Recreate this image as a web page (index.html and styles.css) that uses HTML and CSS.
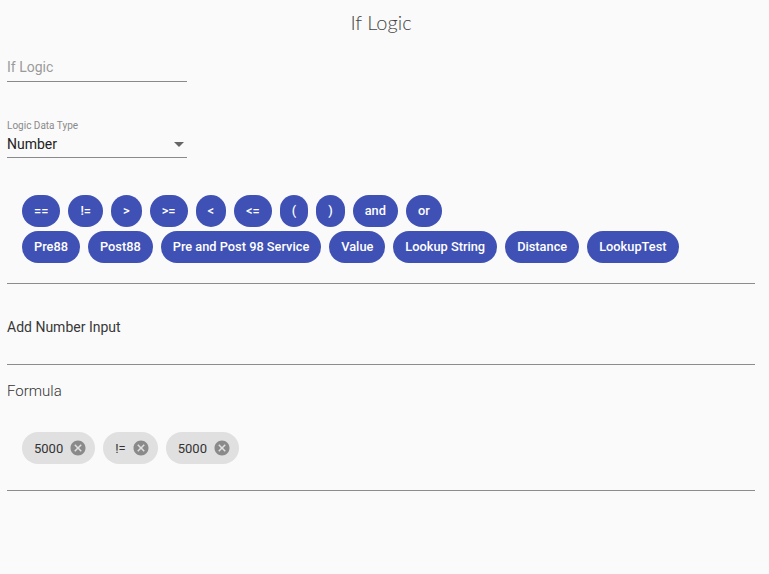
FILE: index.html
```html
<!DOCTYPE html>
<html>
<head>
<meta charset="utf-8">
<link rel="stylesheet" href="styles.css">
</head>
<body>
<div class="page">
  <h1 class="title">If Logic</h1>

  <div class="field field-name">
    <div class="field-input placeholder">If Logic</div>
  </div>

  <div class="field field-type">
    <div class="field-label">Logic Data Type</div>
    <div class="field-input select">
      <span>Number</span>
      <span class="arrow"></span>
    </div>
  </div>

  <div class="btn-rows">
    <div class="btn-row">
      <span class="btn">==</span>
      <span class="btn">!=</span>
      <span class="btn">&gt;</span>
      <span class="btn">&gt;=</span>
      <span class="btn">&lt;</span>
      <span class="btn">&lt;=</span>
      <span class="btn">(</span>
      <span class="btn">)</span>
      <span class="btn">and</span>
      <span class="btn">or</span>
    </div>
    <div class="btn-row">
      <span class="btn">Pre88</span>
      <span class="btn">Post88</span>
      <span class="btn">Pre and Post 98 Service</span>
      <span class="btn">Value</span>
      <span class="btn">Lookup String</span>
      <span class="btn">Distance</span>
      <span class="btn">LookupTest</span>
    </div>
  </div>

  <div class="rule rule-1"></div>

  <div class="number-input">Add Number Input</div>

  <div class="rule rule-2"></div>

  <div class="formula-label">Formula</div>

  <div class="chips">
    <span class="chip">5000<svg class="cancel" viewBox="0 0 24 24"><path d="M12 2C6.47 2 2 6.47 2 12s4.47 10 10 10 10-4.47 10-10S17.53 2 12 2zm5 13.59L15.59 17 12 13.41 8.41 17 7 15.59 10.59 12 7 8.41 8.41 7 12 10.59 15.59 7 17 8.41 13.41 12 17 15.59z"/></svg></span>
    <span class="chip">!=<svg class="cancel" viewBox="0 0 24 24"><path d="M12 2C6.47 2 2 6.47 2 12s4.47 10 10 10 10-4.47 10-10S17.53 2 12 2zm5 13.59L15.59 17 12 13.41 8.41 17 7 15.59 10.59 12 7 8.41 8.41 7 12 10.59 15.59 7 17 8.41 13.41 12 17 15.59z"/></svg></span>
    <span class="chip">5000<svg class="cancel" viewBox="0 0 24 24"><path d="M12 2C6.47 2 2 6.47 2 12s4.47 10 10 10 10-4.47 10-10S17.53 2 12 2zm5 13.59L15.59 17 12 13.41 8.41 17 7 15.59 10.59 12 7 8.41 8.41 7 12 10.59 15.59 7 17 8.41 13.41 12 17 15.59z"/></svg></span>
  </div>

  <div class="rule rule-3"></div>
</div>
</body>
</html>
```

FILE: styles.css
```css
html, body {
  margin: 0;
  padding: 0;
  background: #fafafa;
}

body {
  font-family: Roboto, "Liberation Sans", sans-serif;
  color: #333;
}

.page {
  width: 748px;
  padding: 0 14px 0 7px;
}

.title {
  margin: 0;
  padding-top: 9px;
  font-family: Lato, "Open Sans", sans-serif;
  font-weight: 300;
  font-size: 20px;
  line-height: 26px;
  text-align: center;
  color: #444;
}

.field {
  width: 180px;
}

.field-name {
  margin-top: 22px;
}

.field-input {
  font-size: 14px;
  line-height: 20px;
  padding-bottom: 4px;
  border-bottom: 1px solid #8a8a8a;
}

.placeholder {
  color: #9a9a9a;
}

.field-type {
  margin-top: 38px;
}

.field-label {
  font-size: 10px;
  line-height: 12px;
  color: #8a8a8a;
  margin-bottom: 2px;
}

.select {
  display: flex;
  justify-content: space-between;
  align-items: center;
  color: #222;
  padding-bottom: 3px;
}

.arrow {
  width: 0;
  height: 0;
  border-left: 5px solid transparent;
  border-right: 5px solid transparent;
  border-top: 5px solid #666;
  margin-right: 3px;
}

.btn-rows {
  margin-top: 37px;
  padding-left: 15px;
  display: flex;
  flex-direction: column;
  gap: 4px;
}

.btn-row {
  display: flex;
  gap: 8px;
}

.btn {
  height: 32px;
  line-height: 32px;
  padding: 0 12px;
  border-radius: 16px;
  background: #3f51b5;
  color: #fff;
  font-size: 12.8px;
  font-weight: 500;
  text-align: center;
}

.rule {
  height: 1px;
  background: #8c8c8c;
}

.rule-1 {
  margin-top: 20px;
}

.number-input {
  margin-top: 34px;
  font-size: 14px;
  line-height: 18px;
  color: #383838;
}

.rule-2 {
  margin-top: 28px;
}

.formula-label {
  margin-top: 16px;
  font-family: Roboto, "Liberation Sans", sans-serif;
  font-weight: 300;
  font-size: 15px;
  line-height: 20px;
  color: #333;
}

.chips {
  margin-top: 31px;
  padding-left: 15px;
  display: flex;
  gap: 8px;
}

.chip {
  display: flex;
  align-items: center;
  height: 32px;
  padding: 0 8px 0 12px;
  border-radius: 16px;
  background: #e0e0e0;
  font-size: 13px;
  color: #333;
}

.cancel {
  width: 18px;
  height: 18px;
  margin-left: 6px;
  fill: #8a8a8a;
}

.rule-3 {
  margin-top: 26px;
}
```
